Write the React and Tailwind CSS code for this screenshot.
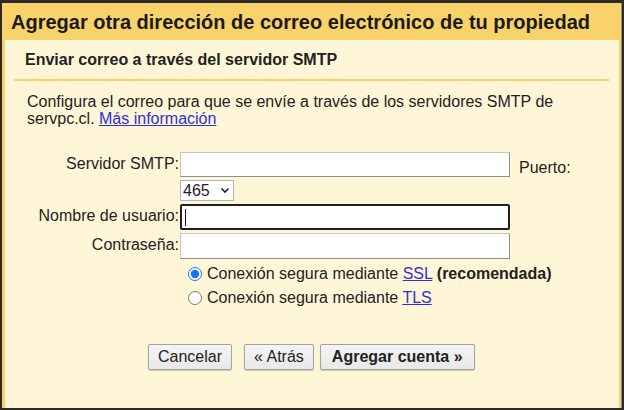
import { useState } from 'react';

const font = { fontFamily: '"Liberation Sans", Arial, sans-serif' };

function Field({ label, children, h }) {
  return (
    <div className={`flex items-start ${h}`}>
      <div className="w-[150px] pr-[1px] text-right">{label}</div>
      {children}
    </div>
  );
}

function TextBox() {
  return <input type="text" className="h-full w-[330px] border border-[#c6c6c6] border-b-[#8f8f8f] border-r-[#8f8f8f] bg-white px-1 outline-none" />;
}

function Radio({ checked, onChange, children }) {
  return (
    <label className="flex h-[24px] items-center">
      <input type="radio" name="sec" checked={checked} onChange={onChange} className="ml-[2px] mr-[5px] h-[14px] w-[14px] accent-[#1a73e8]" />
      <span>{children}</span>
    </label>
  );
}

function Btn({ children, bold }) {
  return (
    <button className={`h-[26px] rounded-[2px] border border-[#a3a3a3] bg-gradient-to-b from-[#f4f4f4] to-[#e9e9e9] text-[16px] text-[#222] shadow-[0_1px_1px_rgba(0,0,0,0.18)] ${bold ? 'px-[11px] font-bold' : 'px-[9px]'}`}>
      {children}
    </button>
  );
}

export default function App() {
  const [sec, setSec] = useState('ssl');

  return (
    <div className="h-[410px] w-[624px] overflow-hidden bg-[#2b2b2b] pb-[2px] pl-[2px] pr-[2px] pt-[3px] text-[#222]" style={font}>
      <div className="flex h-full flex-col border-r border-[#8a8a8a] bg-[#f9d26a] pl-[3px] pr-[2px]">
        <div className="flex h-[37px] shrink-0 items-center pl-[6px] text-[20px] font-bold text-[#1a1a1a]">
          Agregar otra dirección de correo electrónico de tu propiedad
        </div>

        <div className="flex-1 bg-[#fff6d8] text-[16px]">
          <div className="flex h-[39px] items-center pl-[20px] font-bold">
            Enviar correo a través del servidor SMTP
          </div>
          <div className="ml-[9px] mr-[10px] h-[2px] bg-[#f9d26a]" />

          <p className="ml-[22px] mt-[12px] leading-[17px]">
            Configura el correo para que se envíe a través de los servidores SMTP de
            <br />
            servpc.cl.{' '}
            <a href="#" className="text-[#2f2fd6] underline">Más información</a>
          </p>

          <div className="ml-[25px] mt-[25px] flex flex-col gap-[3px]">
            <Field label="Servidor SMTP:" h="h-[25px]">
              <TextBox />
              <span className="ml-[9px] mt-[4px]">Puerto:</span>
            </Field>
            <Field label="" h="h-[21px]">
              <div className="flex h-full w-[54px] items-center justify-between border border-[#b5b5b5] bg-white pl-[2px] pr-[3px]">
                <span>465</span>
                <svg width="10" height="7" viewBox="0 0 10 7" fill="none">
                  <path d="M1.5 1.5 L5 5 L8.5 1.5" stroke="#222" strokeWidth="1.7" />
                </svg>
              </div>
            </Field>
            <Field label="Nombre de usuario:" h="h-[26px]">
              <div className="flex h-full w-[330px] items-center rounded-[2px] border-2 border-[#1f1f1f] bg-white pl-[3px]">
                <span className="h-[17px] w-[1px] bg-[#111]" />
              </div>
            </Field>
            <Field label="Contraseña:" h="h-[26px]">
              <TextBox />
            </Field>
          </div>

          <div className="ml-[181px] mt-[3px] flex flex-col">
            <Radio checked={sec === 'ssl'} onChange={() => setSec('ssl')}>
              Conexión segura mediante <a href="#" className="text-[#2f2fd6] underline">SSL</a> <b>(recomendada)</b>
            </Radio>
            <Radio checked={sec === 'tls'} onChange={() => setSec('tls')}>
              Conexión segura mediante <a href="#" className="text-[#2f2fd6] underline">TLS</a>
            </Radio>
          </div>

          <div className="ml-[143px] mt-[34px] flex">
            <Btn>Cancelar</Btn>
            <div className="ml-[12px] flex gap-[6px]">
              <Btn>« Atrás</Btn>
              <Btn bold>Agregar cuenta »</Btn>
            </div>
          </div>
        </div>
      </div>
    </div>
  );
}
